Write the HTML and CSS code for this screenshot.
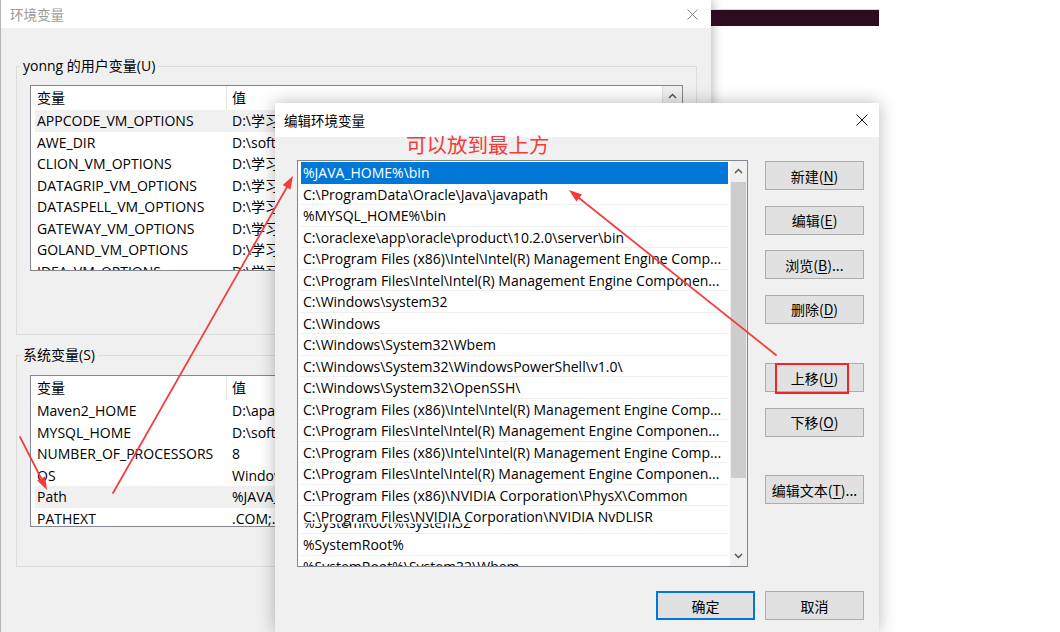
FILE: index.html
```html
<!DOCTYPE html>
<html lang="zh-CN">
<head>
<meta charset="utf-8">
<title>环境变量</title>
<link rel="stylesheet" href="styles.css">
</head>
<body>
<div class="desk">

  <!-- back window -->
  <div class="win-back">
    <div class="tb-back">
      <span class="tb-title">环境变量</span>
      <svg class="xicon" width="11" height="11" viewBox="0 0 11 11"><path d="M0.5 0.5 L10.5 10.5 M10.5 0.5 L0.5 10.5" stroke="#8a8a8a" stroke-width="1"/></svg>
    </div>
    <div class="back-body">
      <div class="group g-user">
        <div class="group-label">yonng 的用户变量(U)</div>
        <div class="vlist vl-user">
          <div class="vl-main">
            <div class="vl-head"><span class="c1">变量</span><span class="c2">值</span></div>
            <div class="vl-row sel"><span class="c1">APPCODE_VM_OPTIONS</span><span class="c2">D:\学习\idea\jetbrains</span></div>
            <div class="vl-row"><span class="c1">AWE_DIR</span><span class="c2">D:\software\awe</span></div>
            <div class="vl-row"><span class="c1">CLION_VM_OPTIONS</span><span class="c2">D:\学习\idea\jetbrains</span></div>
            <div class="vl-row"><span class="c1">DATAGRIP_VM_OPTIONS</span><span class="c2">D:\学习\idea\jetbrains</span></div>
            <div class="vl-row"><span class="c1">DATASPELL_VM_OPTIONS</span><span class="c2">D:\学习\idea\jetbrains</span></div>
            <div class="vl-row"><span class="c1">GATEWAY_VM_OPTIONS</span><span class="c2">D:\学习\idea\jetbrains</span></div>
            <div class="vl-row"><span class="c1">GOLAND_VM_OPTIONS</span><span class="c2">D:\学习\idea\jetbrains</span></div>
            <div class="vl-row"><span class="c1">IDEA_VM_OPTIONS</span><span class="c2">D:\学习\idea\jetbrains</span></div>
          </div>
          <div class="vl-scroll">
            <div class="sb-arrow"><svg width="9" height="6" viewBox="0 0 9 6"><polyline points="1,5 4.5,1.5 8,5" fill="none" stroke="#505050" stroke-width="1.4"/></svg></div>
          </div>
        </div>
      </div>

      <div class="group g-sys">
        <div class="group-label">系统变量(S)</div>
        <div class="vlist vl-sys">
          <div class="vl-main">
            <div class="vl-head"><span class="c1">变量</span><span class="c2">值</span></div>
            <div class="vl-row"><span class="c1">Maven2_HOME</span><span class="c2">D:\apache-maven</span></div>
            <div class="vl-row"><span class="c1">MYSQL_HOME</span><span class="c2">D:\software\mysql</span></div>
            <div class="vl-row"><span class="c1">NUMBER_OF_PROCESSORS</span><span class="c2">8</span></div>
            <div class="vl-row"><span class="c1">OS</span><span class="c2">Windows_NT</span></div>
            <div class="vl-row sel"><span class="c1">Path</span><span class="c2">%JAVA_HOME%\bin</span></div>
            <div class="vl-row"><span class="c1">PATHEXT</span><span class="c2">.COM;.EXE;.BAT</span></div>
          </div>
          <div class="vl-scroll"></div>
        </div>
      </div>
    </div>
  </div>

  <div class="dark-strip"></div>

  <!-- front window -->
  <div class="win-front">
    <div class="tb-front">
      <span class="tb-title">编辑环境变量</span>
      <svg class="xicon" width="12" height="12" viewBox="0 0 12 12"><path d="M0.5 0.5 L11.5 11.5 M11.5 0.5 L0.5 11.5" stroke="#111" stroke-width="1"/></svg>
    </div>
    <div class="front-body">
      <div class="front-main">
        <div class="plist">
          <div class="pl-items">
            <div class="pl-row sel">%JAVA_HOME%\bin</div>
            <div class="pl-row">C:\ProgramData\Oracle\Java\javapath</div>
            <div class="pl-row">%MYSQL_HOME%\bin</div>
            <div class="pl-row">C:\oraclexe\app\oracle\product\10.2.0\server\bin</div>
            <div class="pl-row">C:\Program Files (x86)\Intel\Intel(R) Management Engine Comp...</div>
            <div class="pl-row">C:\Program Files\Intel\Intel(R) Management Engine Componen...</div>
            <div class="pl-row">C:\Windows\system32</div>
            <div class="pl-row">C:\Windows</div>
            <div class="pl-row">C:\Windows\System32\Wbem</div>
            <div class="pl-row">C:\Windows\System32\WindowsPowerShell\v1.0\</div>
            <div class="pl-row">C:\Windows\System32\OpenSSH\</div>
            <div class="pl-row">C:\Program Files (x86)\Intel\Intel(R) Management Engine Comp...</div>
            <div class="pl-row">C:\Program Files\Intel\Intel(R) Management Engine Componen...</div>
            <div class="pl-row">C:\Program Files (x86)\Intel\Intel(R) Management Engine Comp...</div>
            <div class="pl-row">C:\Program Files\Intel\Intel(R) Management Engine Componen...</div>
            <div class="pl-row">C:\Program Files (x86)\NVIDIA Corporation\PhysX\Common</div>
            <div class="pl-row tall"><span class="ghost">%SystemRoot%\system32</span><span class="main">C:\Program Files\NVIDIA Corporation\NVIDIA NvDLISR</span></div>
            <div class="pl-row">%SystemRoot%</div>
            <div class="pl-row">%SystemRoot%\System32\Wbem</div>
          </div>
          <div class="pl-scroll">
            <div class="sb-arrow"><svg width="9" height="6" viewBox="0 0 9 6"><polyline points="1,5 4.5,1.5 8,5" fill="none" stroke="#505050" stroke-width="1.4"/></svg></div>
            <div class="sb-thumb"></div>
            <div class="sb-track"></div>
            <div class="sb-arrow"><svg width="9" height="6" viewBox="0 0 9 6"><polyline points="1,1 4.5,4.5 8,1" fill="none" stroke="#505050" stroke-width="1.4"/></svg></div>
          </div>
        </div>
        <div class="btn-col">
          <div class="btn">新建(<u>N</u>)</div>
          <div class="btn">编辑(<u>E</u>)</div>
          <div class="btn">浏览(<u>B</u>)...</div>
          <div class="btn">删除(<u>D</u>)</div>
          <div class="btn gap-before">上移(<u>U</u>)</div>
          <div class="btn">下移(<u>O</u>)</div>
          <div class="btn gap-before2">编辑文本(<u>T</u>)...</div>
        </div>
      </div>
      <div class="front-foot">
        <div class="btn btn-primary">确定</div>
        <div class="btn">取消</div>
      </div>
    </div>
  </div>

  <!-- annotations -->
  <div class="note">可以放到最上方</div>
  <div class="red-box"></div>
  <svg class="arrows" width="1060" height="632" viewBox="0 0 1060 632">
    <g stroke="#f53a3a" stroke-width="1.7" fill="none" stroke-linecap="round">
      <line x1="113" y1="493" x2="287" y2="187"/>
      <line x1="20" y1="437" x2="41" y2="478"/>
      <line x1="776" y1="355" x2="579" y2="198"/>
    </g>
    <g fill="#f53a3a">
      <polygon points="293,176 290.5,189.5 282.7,185.1"/>
      <polygon points="47,490 45.1,476.4 37.1,480.4"/>
      <polygon points="569,190 582,194.6 576.4,201.6"/>
    </g>
  </svg>
</div>
</body>
</html>
```

FILE: styles.css
```css
html, body {
  margin: 0;
  padding: 0;
}

body {
  background: #ffffff;
  font-family: "Open Sans", "Noto Sans CJK SC", sans-serif;
  font-size: 14px;
  color: #000;
}

.desk {
  position: relative;
  width: 1060px;
  height: 632px;
  overflow: hidden;
  background: #ffffff;
}

/* ---------- back window ---------- */
.win-back {
  position: absolute;
  left: 0;
  top: 0;
  width: 711px;
  height: 632px;
  box-sizing: border-box;
  background: #f0f0f0;
  border-left: 1px solid #b4b4b4;
  box-shadow: 3px 0 9px rgba(0, 0, 0, 0.22);
}

.tb-back {
  height: 28px;
  background: #fff;
  display: flex;
  align-items: center;
  justify-content: space-between;
  padding: 0 13px 0 9px;
}

.tb-title {
  font-family: "Noto Sans CJK SC", sans-serif;
  font-size: 13.5px;
  line-height: 20px;
}

.tb-back .tb-title {
  color: #9a9a9a;
}

.xicon {
  display: block;
}

.back-body {
  padding: 38px 14px 0 15px;
}

.group {
  border: 1px solid #dcdcdc;
  box-sizing: border-box;
}

.g-user {
  height: 269px;
}

.g-sys {
  height: 212px;
  margin-top: 20px;
}

.group-label {
  width: fit-content;
  margin: -11px 0 0 3px;
  padding: 0 3px;
  background: #f0f0f0;
  line-height: 20px;
  white-space: nowrap;
}

.vlist {
  margin: 9px 13px 0;
  border: 1px solid #828790;
  background: #fff;
  box-sizing: border-box;
  display: flex;
  overflow: hidden;
}

.vl-user {
  height: 186px;
}

.vl-sys {
  margin-top: 10px;
  height: 152px;
}

.vl-main {
  flex: 1;
  padding-left: 4px;
  overflow: hidden;
}

.vl-head,
.vl-row {
  display: grid;
  grid-template-columns: 191px 1fr;
  white-space: nowrap;
}

.vl-head {
  height: 24px;
  line-height: 24px;
}

.vl-head .c2 {
  border-left: 1px solid #e5e5e5;
  padding-left: 5px;
}

.vl-row {
  height: 21.5px;
  line-height: 21.5px;
}

.vl-row.sel {
  background: #f0f0f0;
}

.c1 {
  padding-left: 2px;
  overflow: hidden;
}

.c2 {
  padding-left: 6px;
  overflow: hidden;
}

.vl-scroll {
  width: 19px;
  background: #f0f0f0;
  border-left: 1px solid #e0e0e0;
}

.sb-arrow {
  height: 20px;
  display: flex;
  align-items: center;
  justify-content: center;
}

.sb-arrow svg {
  display: block;
}

/* ---------- dark strip (window behind) ---------- */
.dark-strip {
  position: absolute;
  left: 711px;
  top: 9px;
  width: 168px;
  height: 16px;
  background: #2f0b20;
  border-top: 1px solid #d6d6d6;
}

/* ---------- front window ---------- */
.win-front {
  position: absolute;
  left: 275px;
  top: 103px;
  width: 604px;
  height: 529px;
  background: #f0f0f0;
  box-shadow: 0 0 16px rgba(0, 0, 0, 0.28);
}

.tb-front {
  height: 34px;
  background: #fff;
  display: flex;
  align-items: center;
  justify-content: space-between;
  padding: 0 11px 0 9px;
}

.front-body {
  padding: 23px 15px 0 22px;
}

.front-main {
  display: flex;
  gap: 17px;
}

.plist {
  width: 451px;
  height: 407px;
  box-sizing: border-box;
  border: 1px solid #828790;
  background: #fff;
  display: flex;
}

.pl-items {
  flex: 1;
  padding: 1px 2px 0 3px;
  overflow: hidden;
}

.pl-row {
  height: 21.5px;
  line-height: 21px;
  padding-left: 2px;
  box-sizing: border-box;
  border-bottom: 1px solid #f0f0f0;
  white-space: nowrap;
  overflow: hidden;
}

.pl-row.sel {
  background: #0078d7;
  color: #fff;
  border-bottom-color: #0078d7;
}

.pl-row.tall {
  height: 28px;
  position: relative;
}

.pl-row.tall .main {
  position: relative;
  z-index: 1;
}

.pl-row.tall .ghost {
  position: absolute;
  left: 2px;
  top: 6px;
  line-height: 21px;
  clip-path: inset(55% 0 0 0);
}

.pl-scroll {
  width: 17px;
  background: #f0f0f0;
  display: flex;
  flex-direction: column;
}

.sb-thumb {
  height: 296px;
  margin: 1px 1px 0;
  background: #cdcdcd;
}

.sb-track {
  flex: 1;
}

.btn-col {
  width: 99px;
  display: flex;
  flex-direction: column;
  gap: 15.5px;
  padding-top: 1px;
}

.btn {
  height: 29px;
  width: 99px;
  box-sizing: border-box;
  border: 1px solid #adadad;
  background: #e1e1e1;
  display: flex;
  align-items: center;
  justify-content: center;
  font-family: "Noto Sans CJK SC", sans-serif;
  font-size: 14px;
  white-space: nowrap;
}

.btn u {
  text-underline-offset: 2px;
}

.gap-before {
  margin-top: 24px;
}

.gap-before2 {
  margin-top: 23px;
}

.btn-primary {
  border: 2px solid #0078d7;
}

.front-foot {
  display: flex;
  justify-content: flex-end;
  gap: 10px;
  margin-top: 24px;
}

/* ---------- annotations ---------- */
.note {
  position: absolute;
  left: 406px;
  top: 131px;
  font-family: "Noto Sans CJK SC", sans-serif;
  font-size: 20.5px;
  line-height: 26px;
  color: #f23b3b;
  white-space: nowrap;
}

.red-box {
  position: absolute;
  left: 775px;
  top: 363px;
  width: 74px;
  height: 31px;
  box-sizing: border-box;
  border: 2px solid #ee2626;
}

.arrows {
  position: absolute;
  left: 0;
  top: 0;
  pointer-events: none;
}
```
